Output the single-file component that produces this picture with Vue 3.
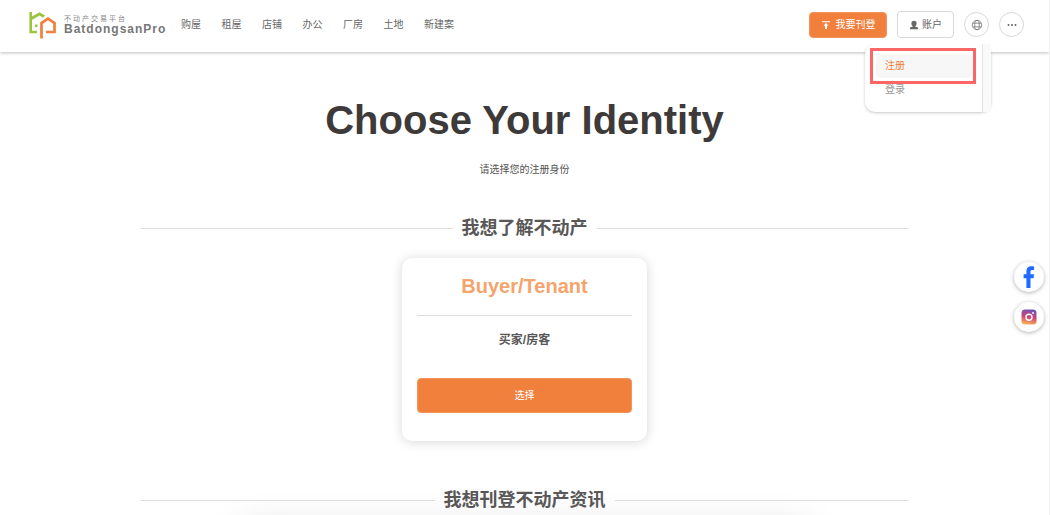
<script setup>
const navItems = ['购屋', '租屋', '店铺', '办公', '厂房', '土地', '新建案']
const accountLinks = [
  { text: '注册', active: true },
  { text: '登录', active: false },
]
</script>

<template>
  <div class="page">
    <header class="topbar">
      <a class="brand" href="#">
        <svg class="brand-mark" viewBox="0 0 28 28" aria-hidden="true">
          <path d="M9 21H2.700V1" fill="none" stroke="#9bc53d" stroke-width="2.600" />
          <path d="M3 9.500V6l8.500-4.800L17 4.500l-2 2.300-3.500-2.200z" fill="#9bc53d" />
          <path d="M7 13.500h2.500v2.600H7z" fill="#9bc53d" />
          <path d="M13.500 27.500V12l6.500-4.300 6.500 4.300V21H18" fill="none" stroke="#f0803c" stroke-width="2.700" />
        </svg>
        <span class="brand-text">
          <span class="brand-sub">不动产交易平台</span>
          <span class="brand-name">BatdongsanPro</span>
        </span>
      </a>
      <nav class="nav">
        <a v-for="item in navItems" :key="item" href="#">{{ item }}</a>
      </nav>
      <div class="actions">
        <button class="publish" type="button">
          <svg viewBox="0 0 10 10" width="10" height="10" aria-hidden="true">
            <path d="M1 1.200h8v1H1zM5 3l2.500 2.800H6V9H4V5.800H2.500z" fill="#fff" />
          </svg>
          我要刊登
        </button>
        <div class="account-wrap">
          <button class="account" type="button">
            <svg viewBox="0 0 10 10" width="10" height="10" aria-hidden="true">
              <path d="M5 .8c1.700 0 2.600 1.100 2.600 2.600 0 1.200-.6 2.300-1.400 2.700v.5L9 7.600V9.200H1V7.600l2.800-1v-.5C3 5.700 2.400 4.600 2.400 3.400 2.400 1.900 3.300.8 5 .8z" fill="#666" />
            </svg>
            账户
          </button>
          <div class="menu">
            <div class="menu-list">
              <a
                v-for="link in accountLinks"
                :key="link.text"
                href="#"
                :class="{ active: link.active }"
              >{{ link.text }}</a>
            </div>
            <div class="menu-track"></div>
            <div class="marker"></div>
          </div>
        </div>
        <button class="round" type="button" aria-label="语言">
          <svg viewBox="0 0 12 12" width="12" height="12" fill="none" stroke="#777" stroke-width=".8" aria-hidden="true">
            <circle cx="6" cy="6" r="4.700" />
            <ellipse cx="6" cy="6" rx="2.300" ry="4.700" />
            <path d="M1.800 4.200h8.400M1.800 7.800h8.400" />
          </svg>
        </button>
        <button class="round" type="button" aria-label="更多">
          <svg viewBox="0 0 12 12" width="12" height="12" fill="#666" aria-hidden="true">
            <circle cx="2.500" cy="6" r="1" />
            <circle cx="6" cy="6" r="1" />
            <circle cx="9.500" cy="6" r="1" />
          </svg>
        </button>
      </div>
    </header>

    <main class="content">
      <h1>Choose Your Identity</h1>
      <p class="lead">请选择您的注册身份</p>

      <h2 class="section-title">我想了解不动产</h2>
      <section class="card">
        <h3>Buyer/Tenant</h3>
        <p class="role">买家/房客</p>
        <button class="choose" type="button">选择</button>
      </section>

      <h2 class="section-title">我想刊登不动产资讯</h2>
      <section class="panel"></section>
    </main>

    <aside class="social">
      <a href="#" aria-label="Facebook">
        <svg viewBox="0 0 12 22" width="12" height="22" aria-hidden="true">
          <path d="M3.400 22V12.300H.6V8.300h2.800V5.200C3.400 2 5.200.2 8.200.2c1.300 0 2.500.1 2.900.2v3.500H9.200C7.800 3.900 7.500 4.600 7.500 5.700v2.600h3.500l-.5 4h-3V22z" fill="#1f6bff" />
        </svg>
      </a>
      <a href="#" aria-label="Instagram">
        <svg viewBox="0 0 16 16" width="16" height="16" aria-hidden="true">
          <defs>
            <linearGradient id="insta" x1=".6" y1="0" x2=".4" y2="1">
              <stop offset="0" stop-color="#6a55b8" />
              <stop offset=".5" stop-color="#cf4377" />
              <stop offset="1" stop-color="#f9b255" />
            </linearGradient>
          </defs>
          <rect x=".5" y=".5" width="15" height="15" rx="3.500" fill="url(#insta)" />
          <circle cx="8" cy="8.200" r="3" fill="none" stroke="#fff" stroke-width="1.400" />
          <circle cx="12" cy="4" r=".9" fill="#fff" />
        </svg>
      </a>
    </aside>
  </div>
</template>

<style>
body {
  margin: 0;
  background: #fff;
}
</style>

<style scoped>
.page {
  box-sizing: border-box;
  height: 100vh;
  overflow: hidden;
  border-right: 1px solid #eee;
  font-family: "Liberation Sans", "Noto Sans CJK SC", sans-serif;
  font-size: 10px;
  line-height: 16px;
  color: #666;
}
a {
  color: inherit;
  text-decoration: none;
}
button {
  box-sizing: border-box;
  padding: 0;
  font: inherit;
  color: inherit;
  background: #fff;
  border: 1px solid #d8d8d8;
  display: flex;
  align-items: center;
  justify-content: center;
}
.topbar {
  position: relative;
  z-index: 2;
  box-sizing: border-box;
  height: 52px;
  padding: 0 25px 3px 28px;
  display: flex;
  align-items: center;
  background: #fff;
  box-shadow: 0 1px 3px rgba(0, 0, 0, 0.25);
}
.brand {
  display: flex;
  align-items: center;
  gap: 8px;
  width: 153px;
}
.brand-mark {
  flex: none;
  width: 28px;
  height: 28px;
}
.brand-text {
  display: flex;
  flex-direction: column;
}
.brand-sub {
  font-size: 7px;
  line-height: 9px;
  letter-spacing: 2px;
  color: #888;
}
.brand-name {
  font-size: 12px;
  line-height: 13px;
  font-weight: bold;
  letter-spacing: 1px;
  color: #777;
}
.nav {
  display: flex;
  justify-content: space-between;
  width: 273px;
}
.actions {
  margin-left: auto;
  display: flex;
  align-items: center;
  gap: 10px;
}
.publish {
  width: 78px;
  height: 26px;
  gap: 5px;
  color: #fff;
  background: #f0803c;
  border-color: #f3945b;
  border-radius: 4px;
}
.account-wrap {
  position: relative;
}
.account {
  width: 57px;
  height: 27px;
  gap: 3px;
  border-radius: 4px;
}
.round {
  width: 25px;
  height: 25px;
  border-radius: 50%;
}
.menu {
  position: absolute;
  top: 33px;
  right: -37px;
  width: 126px;
  height: 68px;
  display: flex;
  background: #fff;
  border-radius: 10px;
  box-shadow: 0 1px 3px rgba(0, 0, 0, 0.22);
  clip-path: inset(0 -4px -4px -4px);
}
.menu-list {
  flex: 1;
  padding: 10px 10px 0 11px;
}
.menu-list a {
  display: block;
  padding: 4px 9px;
  border-radius: 5px;
  color: #999;
}
.menu-list a.active {
  color: #f0803c;
  background: #f7f7f7;
}
.menu-track {
  width: 8px;
  border-left: 1px solid #e4e4e4;
  background: #fafafa;
}
.marker {
  position: absolute;
  top: 4px;
  left: 5px;
  width: 100px;
  height: 30px;
  border: 3px solid #fc6666;
}
.content {
  box-sizing: border-box;
  max-width: 768px;
  margin: 0 auto;
  padding-top: 44px;
  text-align: center;
}
h1 {
  margin: 0;
  font-size: 40px;
  line-height: 48px;
  color: #3e3a39;
}
.lead {
  margin: 18px 0 0;
  color: #555;
}
.section-title {
  margin: 38px 0 0;
  display: flex;
  align-items: center;
  gap: 9px;
  font-size: 18px;
  line-height: 24px;
  color: #595757;
}
.section-title::before,
.section-title::after {
  content: "";
  flex: 1;
  height: 1px;
  background: #dcdddd;
}
.card {
  box-sizing: border-box;
  width: 245px;
  margin: 18px auto 0;
  padding: 15px 15px 28px;
  border-radius: 10px;
  background: #fff;
  box-shadow: 0 1px 12px rgba(0, 0, 0, 0.16);
}
.card h3 {
  margin: 0;
  padding-bottom: 15px;
  border-bottom: 1px solid #dcdddd;
  font-size: 20px;
  line-height: 27px;
  color: #f5a46c;
}
.role {
  margin: 14px 0 0;
  font-size: 12px;
  line-height: 20px;
  font-weight: bold;
  color: #595757;
}
.choose {
  width: 100%;
  height: 35px;
  margin-top: 28px;
  color: #fff;
  background: #f0803c;
  border-color: #f3945b;
  border-radius: 4px;
}
.card + .section-title {
  margin-top: 47px;
}
.panel {
  height: 180px;
  margin: 18px 100px 0;
  border-radius: 10px;
  background: #fff;
  box-shadow: 0 0 40px rgba(0, 0, 0, 0.16);
}
.social {
  position: fixed;
  top: 262px;
  right: 6px;
  display: flex;
  flex-direction: column;
  gap: 10px;
}
.social a {
  width: 30px;
  height: 30px;
  display: flex;
  align-items: center;
  justify-content: center;
  border-radius: 50%;
  background: #fff;
  box-shadow: 0 1px 4px rgba(0, 0, 0, 0.3);
}
</style>
